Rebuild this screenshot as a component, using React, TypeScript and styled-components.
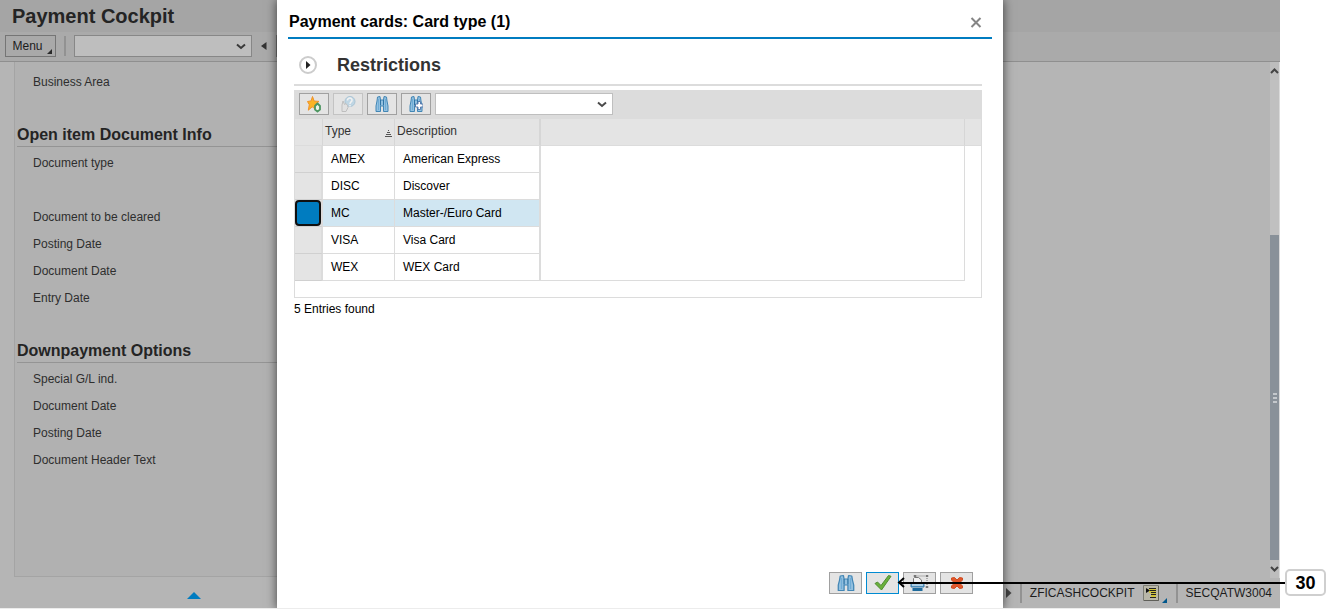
import React from "react";
import styled, { createGlobalStyle } from "styled-components";

const GlobalStyle = createGlobalStyle`
  * { box-sizing: border-box; }
  body {
    margin: 0;
    background: #ffffff;
    font-family: "Liberation Sans", Arial, sans-serif;
    font-size: 12px;
    line-height: 14px;
    color: #000000;
  }
  button, select { font: inherit; color: inherit; margin: 0; padding: 0; }
  h1, h2 { margin: 0; font-weight: bold; }
`;

const Page = styled.div`
  position: relative;
  display: flex;
  min-height: 100vh;
  padding-right: 53px;
`;

const AppFrame = styled.div`
  position: relative;
  flex: 1;
  display: flex;
  flex-direction: column;
  overflow: hidden;
  background: #b5b5b5;
  border-bottom: 1px solid #ececec;
`;

const TitleBar = styled.header`
  height: 32px;
  padding: 0 12px;
  background: #a5a5a5;
`;

const AppTitle = styled.h1`
  font-size: 20px;
  line-height: 32px;
  color: #242424;
`;

const AppToolbar = styled.div`
  display: flex;
  align-items: center;
  height: 30px;
  padding: 0 5px 1px;
  background: #aaaaaa;
  border-bottom: 1px solid #8f8f8f;
`;

const MenuButton = styled.button`
  position: relative;
  width: 51px;
  height: 22px;
  padding-right: 6px;
  text-align: center;
  color: #1c1c1c;
  background: #a9a9a9;
  border: 1px solid #757575;
`;

const CornerMark = styled.svg`
  position: absolute;
  right: 3px;
  bottom: 2px;
`;

const Divider = styled.span`
  width: 2px;
  height: 20px;
  margin: 0 8px;
  background: #929292;
`;

const SelectWrap = styled.div`
  position: relative;
  width: 178px;
  height: 22px;
`;

const Select = styled.select<{ $dim?: boolean }>`
  appearance: none;
  width: 100%;
  height: 100%;
  padding: 0 20px 0 6px;
  border: 1px solid ${(p) => (p.$dim ? "#878787" : "#bfbfbf")};
  border-radius: 0;
  background: ${(p) => (p.$dim ? "#bebebe" : "#ffffff")};
`;

const SelectArrow = styled.svg`
  position: absolute;
  right: 6px;
  top: 8px;
  pointer-events: none;
`;

const PlainButton = styled.button`
  display: flex;
  align-items: center;
  justify-content: center;
  width: 16px;
  height: 22px;
  border: 0;
  background: transparent;
`;

const CollapseButton = styled(PlainButton)`
  width: 24px;
`;

const CommandButton = styled.button`
  width: 60px;
  height: 22px;
  background: #a9a9a9;
  border: 1px solid #757575;
`;

const Workspace = styled.div`
  flex: 1;
  display: flex;
`;

const Content = styled.main`
  flex: 1;
  display: flex;
  padding: 0 30% 1px 14px;
`;

const FormPanel = styled.div`
  flex: 1;
  padding-top: 7px;
  background: #b1b1b1;
  border: 1px solid #a4a4a4;
  border-top: 0;
`;

const FieldLabel = styled.div`
  height: 27px;
  padding-left: 18px;
  line-height: 27px;
  color: #2e2e2e;
`;

const SectionTitle = styled.h2`
  height: 27px;
  margin: 24px 0 3px 2px;
  font-size: 16px;
  line-height: 30px;
  color: #242424;
  border-bottom: 1px solid #949494;
`;

const ScrollBar = styled.div`
  display: flex;
  flex-direction: column;
  width: 10px;
  background: #c0c0c0;
  border-right: 1px solid #dadada;
`;

const ScrollArrow = styled.button`
  display: flex;
  align-items: center;
  justify-content: center;
  height: 18px;
  border: 0;
  background: #bdbdbd;
`;

const ScrollTrack = styled.div`
  flex: 1;
  display: flex;
  flex-direction: column;
`;

const ScrollSpace = styled.div`
  flex: 155;
`;

const ScrollThumb = styled.div`
  flex: 325;
  display: flex;
  flex-direction: column;
  align-items: center;
  justify-content: center;
  gap: 2px;
  background: #899199;
`;

const Grip = styled.span`
  width: 4px;
  height: 2px;
  background: #c4c8cc;
`;

const StatusBar = styled.footer`
  display: flex;
  align-items: center;
  justify-content: space-between;
  height: 30px;
  padding: 0 8px 0 186px;
  color: #1c1c1c;
`;

const MessageButton = styled(PlainButton)`
  padding-top: 4px;
`;

const StatusGroup = styled.div`
  display: flex;
  align-items: center;
`;

const StatusIcon = styled.svg`
  margin-left: 8px;
`;

const StatusCorner = styled.svg`
  align-self: flex-end;
  margin: 0 1px 0 2px;
`;

const Dialog = styled.section`
  position: absolute;
  inset: 0 0 -1px;
  display: flex;
  flex-direction: column;
  width: 726px;
  max-width: 100%;
  margin: 0 auto;
  padding: 0 11px 15px;
  background: #ffffff;
  box-shadow: 0 0 10px rgba(0, 0, 0, 0.65);
`;

const DialogHeader = styled.div`
  display: flex;
  align-items: center;
  justify-content: space-between;
  height: 39px;
  padding: 6px 8px 0 1px;
  border-bottom: 2px solid #007cc0;
`;

const DialogTitle = styled.h2`
  font-size: 16px;
  line-height: 20px;
`;

const DialogBody = styled.div`
  flex: 1;
  padding: 0 10px 0 6px;
`;

const Restrictions = styled.div`
  display: flex;
  align-items: center;
  gap: 20px;
  height: 47px;
  margin-bottom: 4px;
  padding: 7px 0 0 5px;
  border-bottom: 2px solid #dcdcdc;
`;

const ExpandButton = styled.button`
  display: flex;
  align-items: center;
  justify-content: center;
  width: 18px;
  height: 18px;
  border: 2px solid #cccccc;
  border-radius: 50%;
  background: #ffffff;
`;

const RestrictionsTitle = styled.h2`
  font-size: 18px;
  line-height: 22px;
  color: #333333;
`;

const GridToolbar = styled.div`
  display: flex;
  gap: 4px;
  height: 29px;
  padding: 3px 5px 4px;
  background: #dcdcdc;
`;

const IconButton = styled.button<{ $w: number; $active?: boolean }>`
  display: flex;
  align-items: center;
  justify-content: center;
  width: ${(p) => p.$w}px;
  height: 22px;
  background: #e4e4e4;
  border: 1px solid ${(p) => (p.$active ? "#008bd2" : "#a0a0a0")};
  &:disabled { border-color: #c3c3c3; }
  &:disabled svg { opacity: 0.5; }
`;

const GridFrame = styled.div`
  padding-bottom: 16px;
  border: 1px solid #dcdcdc;
  border-top: 0;
`;

const Table = styled.table`
  width: 100%;
  table-layout: fixed;
  border-collapse: separate;
  border-spacing: 0;
`;

const HeadCell = styled.th<{ $line?: number }>`
  height: 27px;
  padding: 0 2px 2px;
  text-align: left;
  font-weight: normal;
  color: #333333;
  background: #e4e4e4;
  border-bottom: 1px solid #dcdcdc;
  border-right: ${(p) => p.$line ?? 0}px solid #d6d6d6;
`;

const HeadContent = styled.div`
  display: flex;
  align-items: flex-end;
  justify-content: space-between;
`;

const Cell = styled.td<{ $line: number; $selected: boolean }>`
  height: 27px;
  padding: 0 8px 1px;
  background: ${(p) => (p.$selected ? "#d0e6f2" : "#ffffff")};
  border-bottom: 1px solid #dcdcdc;
  border-right: ${(p) => p.$line}px solid #dcdcdc;
`;

const SelectorCell = styled.td`
  height: 27px;
  padding: 0;
  background: #e4e4e4;
  border-bottom: 1px solid #d0d0d0;
  border-right: 2px solid #dcdcdc;
`;

const RowSelector = styled.button<{ $selected: boolean }>`
  display: block;
  width: 100%;
  height: 26px;
  border: ${(p) => (p.$selected ? "2px solid #101010" : "0")};
  border-radius: ${(p) => (p.$selected ? 4 : 0)}px;
  background: ${(p) => (p.$selected ? "#007cc0" : "transparent")};
`;

const FillerCell = styled.td`
  border-right: 1px solid #dcdcdc;
  border-bottom: 1px solid #dcdcdc;
`;

const GutterCell = styled.td`
  padding: 0;
`;

const EntryCount = styled.p`
  margin: 4px 0 0;
`;

const DialogFooter = styled.div`
  display: flex;
  justify-content: flex-end;
  gap: 4px;
  padding-right: 19px;
`;

const Annotation = styled.div`
  position: absolute;
  left: calc((100% - 53px) / 2 + 257px);
  right: 7px;
  bottom: 13px;
  display: flex;
  align-items: center;
  pointer-events: none;
`;

const ArrowHead = styled.svg`
  margin-right: -8px;
`;

const ArrowLine = styled.div`
  flex: 1;
  height: 2px;
  background: #000000;
`;

const Callout = styled.div`
  width: 41px;
  height: 27px;
  border: 2px solid #cfcfcf;
  border-radius: 5px;
  background: #ffffff;
  text-align: center;
  font-size: 18px;
  font-weight: bold;
  line-height: 24px;
`;

const Chevron = ({ color = "#4a4a4a" }: { color?: string }) => (
  <SelectArrow width="10" height="7" viewBox="0 0 10 7">
    <path d="M1 1.500 5 5 9 1.500" fill="none" stroke={color} strokeWidth="2" />
  </SelectArrow>
);

const BinocularsIcon = ({ wide = false, next = false }: { wide?: boolean; next?: boolean }) => (
  <svg
    width={wide ? 18 : 14}
    height="18"
    viewBox="0 0 14 18"
    preserveAspectRatio="none"
  >
    <path
      d="M2.500 2 5 1.500l.5 3.500h3L9 1.500l2.500.5.5 4 1 5v5.500H8.500V11h-3v5.500H1V11l1-5z"
      fill="#93c1e0"
      stroke="#4286b5"
      strokeWidth="1"
      strokeLinejoin="round"
    />
    <path d="M5.500 5v5.500M8.500 5v5.500" stroke="#2f74a5" />
    <path d="M3.500 4v11M10.500 4v11" stroke="#6facd6" />
    {next && (
      <path
        d="M9 6.500h2.500v2.500H14v3h-2.500v2.500H9V12H6.500V9H9z"
        fill="#ffffff"
        stroke="#5a7cae"
        strokeWidth="1"
      />
    )}
  </svg>
);

const StarIcon = () => (
  <svg width="18" height="18" viewBox="0 0 18 18">
    <path
      d="M7.500 1.500l1.600 4.500 4.900.4-3.800 3 .8 5.100-3.800-2.700-3.900 3.400 1-5.500L2.500 6.500l3.600-.6z"
      fill="#fcb424"
      stroke="#f0922a"
      strokeWidth="1"
    />
    <path
      d="M12.500 8.500 15 11v3.500l-2.500 2-2.500-2V11z"
      fill="#eef3ea"
      stroke="#4b9560"
      strokeWidth="1.800"
      strokeLinejoin="round"
    />
  </svg>
);

const HelpHandIcon = () => (
  <svg width="18" height="18" viewBox="0 0 18 18">
    <circle cx="11" cy="6.500" r="5" fill="#9cc9e4" stroke="#72a6c7" />
    <path
      d="M8.500 5.500c0-3.500 5-3 4.500 0-.3 1.500-2 1.500-2 3.500M11 10v1.500"
      fill="none"
      stroke="#ffffff"
      strokeWidth="1.500"
    />
    <path
      d="M3 16.500V10l1-4 1.500 3.500L7 8.500l1.500 2 .5 2-2 4z"
      fill="#e0e0e0"
      stroke="#9a9a9a"
    />
  </svg>
);

const CheckIcon = () => (
  <svg width="20" height="18" viewBox="0 0 20 18">
    <path
      d="M2 9.500 4.500 8 8 11.500 15.500 1.500l2.500.8L8.500 16z"
      fill="#6bb03c"
      stroke="#4f8d31"
      strokeWidth="1"
      strokeLinejoin="round"
    />
  </svg>
);

const PrintIcon = () => (
  <svg width="20" height="18" viewBox="0 0 20 18">
    <path d="M3.500 8.500V4.500l1-1h4L11.500 6v2.500" fill="#f2f2f2" stroke="#777777" />
    <path d="M2 8.500h10.500l1.500 2v2.500H1v-2.500z" fill="#5c9fcb" stroke="#3a7ba8" />
    <path d="M2.500 14h10v3h-10z" fill="#1f6b9c" />
    <path d="M2 11h11" stroke="#ffffff" />
    <path d="M5.500 2h10M17 4v8" fill="none" stroke="#777777" strokeDasharray="1 1" />
    <path
      d="M4 1.500h2v1H4zM16 1.500h2v1h-2zM16 12.500h2v1h-2z"
      fill="#e4e4e4"
      stroke="#777777"
    />
  </svg>
);

const CancelIcon = () => (
  <svg width="14" height="14" viewBox="0 0 14 14">
    <path
      d="M1.500 2 4.500 1.500 7 4l2.500-2.500 3 .5v2L9.500 7l3 3v2l-3 .5L7 10l-2.500 2.500-3-.5v-2l3-3-3-3z"
      fill="#e1572b"
      stroke="#cf4d22"
      strokeWidth="1"
      strokeLinejoin="round"
    />
  </svg>
);

const cards = [
  { type: "AMEX", description: "American Express" },
  { type: "DISC", description: "Discover" },
  { type: "MC", description: "Master-/Euro Card" },
  { type: "VISA", description: "Visa Card" },
  { type: "WEX", description: "WEX Card" },
];

const documentFields = [
  "Document type",
  "",
  "Document to be cleared",
  "Posting Date",
  "Document Date",
  "Entry Date",
];

const downpaymentFields = [
  "Special G/L ind.",
  "Document Date",
  "Posting Date",
  "Document Header Text",
];

function CardTypeDialog() {
  const [selected, setSelected] = React.useState("MC");
  return (
    <Dialog role="dialog" aria-labelledby="dialog-title">
      <DialogHeader>
        <DialogTitle id="dialog-title">Payment cards: Card type (1)</DialogTitle>
        <PlainButton aria-label="Close">
          <svg width="12" height="12" viewBox="0 0 12 12">
            <path d="M1.500 2l9 9M10.500 2l-9 9" stroke="#858585" strokeWidth="2" />
          </svg>
        </PlainButton>
      </DialogHeader>
      <DialogBody>
        <Restrictions>
          <ExpandButton aria-label="Expand restrictions">
            <svg width="6" height="8" viewBox="0 0 6 8">
              <path d="M1 0l4.500 4L1 8z" fill="#222222" />
            </svg>
          </ExpandButton>
          <RestrictionsTitle>Restrictions</RestrictionsTitle>
        </Restrictions>
        <GridToolbar>
          <IconButton $w={30} aria-label="Add to favorites"><StarIcon /></IconButton>
          <IconButton $w={30} aria-label="Help" disabled><HelpHandIcon /></IconButton>
          <IconButton $w={30} aria-label="Find"><BinocularsIcon /></IconButton>
          <IconButton $w={30} aria-label="Find next"><BinocularsIcon next /></IconButton>
          <SelectWrap>
            <Select aria-label="List command"><option /></Select>
            <Chevron />
          </SelectWrap>
        </GridToolbar>
        <GridFrame>
          <Table>
            <colgroup>
              <col style={{ width: 28 }} />
              <col style={{ width: 72 }} />
              <col style={{ width: 146 }} />
              <col />
              <col style={{ width: 16 }} />
            </colgroup>
            <thead>
              <tr>
                <HeadCell $line={1} aria-label="Select" />
                <HeadCell $line={1} scope="col">
                  <HeadContent>
                    Type
                    <svg width="7" height="8" viewBox="0 0 7 8">
                      <path d="M3 .5h1M2 2.500h3M1 4.500h5M0 6.500h7" stroke="#555555" />
                    </svg>
                  </HeadContent>
                </HeadCell>
                <HeadCell $line={2} scope="col">Description</HeadCell>
                <HeadCell $line={1} />
                <HeadCell />
              </tr>
            </thead>
            <tbody>
              {cards.map((card, i) => {
                const on = card.type === selected;
                return (
                  <tr key={card.type}>
                    <SelectorCell>
                      <RowSelector
                        $selected={on}
                        aria-label={card.description}
                        aria-pressed={on}
                        onClick={() => setSelected(card.type)}
                      />
                    </SelectorCell>
                    <Cell $line={1} $selected={on}>{card.type}</Cell>
                    <Cell $line={2} $selected={on}>{card.description}</Cell>
                    {i === 0 && <FillerCell rowSpan={cards.length} />}
                    {i === 0 && <GutterCell rowSpan={cards.length} />}
                  </tr>
                );
              })}
            </tbody>
          </Table>
        </GridFrame>
        <EntryCount>5 Entries found</EntryCount>
      </DialogBody>
      <DialogFooter>
        <IconButton $w={33} aria-label="Find"><BinocularsIcon wide /></IconButton>
        <IconButton $w={33} $active aria-label="Confirm"><CheckIcon /></IconButton>
        <IconButton $w={33} aria-label="Print"><PrintIcon /></IconButton>
        <IconButton $w={33} aria-label="Cancel"><CancelIcon /></IconButton>
      </DialogFooter>
    </Dialog>
  );
}

export default function App() {
  return (
    <Page>
      <GlobalStyle />
      <AppFrame>
        <TitleBar>
          <AppTitle>Payment Cockpit</AppTitle>
        </TitleBar>
        <AppToolbar>
          <MenuButton>
            Menu
            <CornerMark width="5" height="5" viewBox="0 0 5 5">
              <path d="M5 0v5H0z" fill="#2a2a2a" />
            </CornerMark>
          </MenuButton>
          <Divider />
          <SelectWrap>
            <Select $dim aria-label="Command"><option /></Select>
            <Chevron color="#3a3a3a" />
          </SelectWrap>
          <CollapseButton aria-label="Collapse command field">
            <svg width="6" height="8" viewBox="0 0 6 8">
              <path d="M5.500 0v8L0 4z" fill="#333333" />
            </svg>
          </CollapseButton>
          <CommandButton aria-label="Back" />
        </AppToolbar>
        <Workspace>
          <Content>
            <FormPanel>
              <FieldLabel>Business Area</FieldLabel>
              <SectionTitle>Open item Document Info</SectionTitle>
              {documentFields.map((label, i) => (
                <FieldLabel key={i}>{label}</FieldLabel>
              ))}
              <SectionTitle>Downpayment Options</SectionTitle>
              {downpaymentFields.map((label) => (
                <FieldLabel key={label}>{label}</FieldLabel>
              ))}
            </FormPanel>
          </Content>
          <ScrollBar>
            <ScrollArrow aria-label="Scroll up">
              <svg width="9" height="6" viewBox="0 0 9 6">
                <path d="M1 5l3.500-3.500L8 5" fill="none" stroke="#444444" strokeWidth="2" />
              </svg>
            </ScrollArrow>
            <ScrollTrack>
              <ScrollSpace />
              <ScrollThumb>
                <Grip />
                <Grip />
                <Grip />
              </ScrollThumb>
            </ScrollTrack>
            <ScrollArrow aria-label="Scroll down">
              <svg width="9" height="6" viewBox="0 0 9 6">
                <path d="M1 1l3.500 3.500L8 1" fill="none" stroke="#444444" strokeWidth="2" />
              </svg>
            </ScrollArrow>
          </ScrollBar>
        </Workspace>
        <StatusBar>
          <MessageButton aria-label="Show messages">
            <svg width="14" height="7" viewBox="0 0 14 7">
              <path d="M7 0l7 7H0z" fill="#007cc0" />
            </svg>
          </MessageButton>
          <StatusGroup>
            <svg width="6" height="10" viewBox="0 0 6 10">
              <path d="M0 0l5.500 5L0 10z" fill="#444444" />
            </svg>
            <Divider />
            ZFICASHCOCKPIT
            <StatusIcon width="17" height="17" viewBox="0 0 17 17">
              <path d="M.5.5h15v15H.5z" fill="#b9b7a8" stroke="#7d7d74" />
              <path d="M15.500 1v14.500H1" fill="none" stroke="#5f5f59" />
              <path d="M6 3h7v9H8V8H6z" fill="#cfc23a" />
              <path d="M6 3.500h7M7 5.500h6M8 7.500h5M8 9.500h5M7 12.500h6" stroke="#222222" />
              <path d="M3 3l4 2.500L3 8z" fill="#111111" />
            </StatusIcon>
            <StatusCorner width="5" height="5" viewBox="0 0 5 5">
              <path d="M5 0v5H0z" fill="#00578c" />
            </StatusCorner>
            <Divider />
            SECQATW3004
          </StatusGroup>
        </StatusBar>
        <CardTypeDialog />
      </AppFrame>
      <Annotation>
        <ArrowHead width="10" height="11" viewBox="0 0 10 11">
          <path d="M7 1 2 5.500l5 4.500" fill="none" stroke="#000000" strokeWidth="2" />
        </ArrowHead>
        <ArrowLine />
        <Callout>30</Callout>
      </Annotation>
    </Page>
  );
}
